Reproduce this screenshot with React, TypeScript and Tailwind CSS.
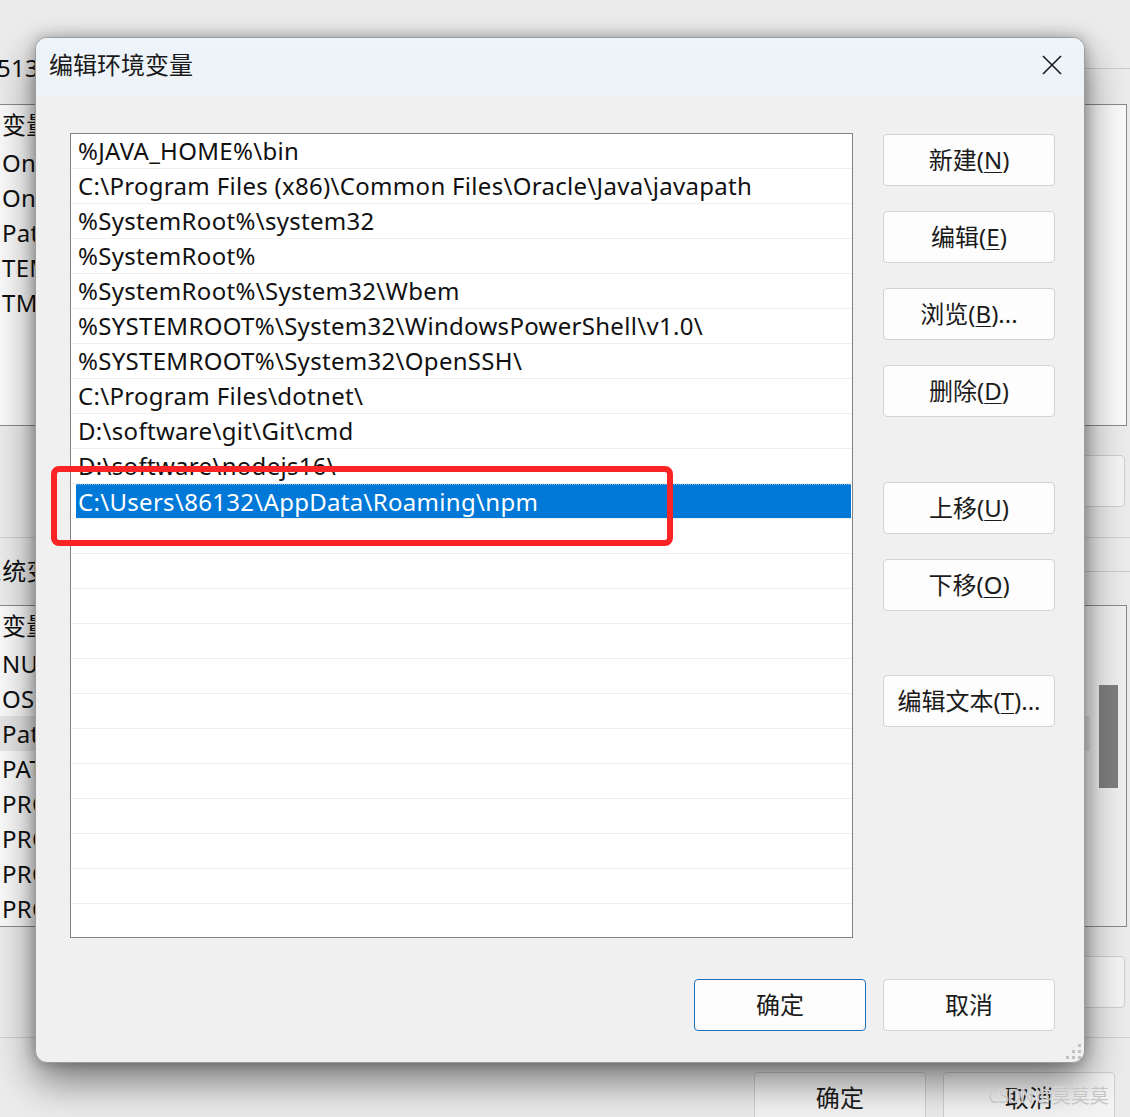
import React from "react";

const paths: string[] = [
  "%JAVA_HOME%\\bin",
  "C:\\Program Files (x86)\\Common Files\\Oracle\\Java\\javapath",
  "%SystemRoot%\\system32",
  "%SystemRoot%",
  "%SystemRoot%\\System32\\Wbem",
  "%SYSTEMROOT%\\System32\\WindowsPowerShell\\v1.0\\",
  "%SYSTEMROOT%\\System32\\OpenSSH\\",
  "C:\\Program Files\\dotnet\\",
  "D:\\software\\git\\Git\\cmd",
  "D:\\software\\nodejs16\\",
  "C:\\Users\\86132\\AppData\\Roaming\\npm",
];

const rows: string[] = [...paths, ...Array.from({ length: 12 }, () => "")];

function M({ children }: { children: React.ReactNode }) {
  return <span className="underline decoration-1 underline-offset-[3px]">{children}</span>;
}

function WinButton({
  children,
  primary,
  className,
}: {
  children?: React.ReactNode;
  primary?: boolean;
  className?: string;
}) {
  return (
    <div
      className={
        "flex h-[52px] w-[172px] shrink-0 items-center justify-center rounded-[4px] border bg-[#fdfdfd] text-[24px] text-[#1b1b1b] " +
        (primary ? "border-[#1f6fbf] " : "border-[#d2d2d2] ") +
        (className ?? "")
      }
    >
      {children}
    </div>
  );
}

function BgButton({ children }: { children?: React.ReactNode }) {
  return (
    <div className="flex h-[52px] w-[172px] shrink-0 items-center justify-center rounded-[4px] border border-[#cfcfcf] bg-[#f4f4f4] text-[24px] text-[#1b1b1b]">
      {children}
    </div>
  );
}

function Background() {
  const user = ["OneDrive", "OneDriveConsumer", "Path", "TEMP", "TMP"];
  const sys = ["NUMBER_OF_PROCESSORS", "OS", "Path", "PATHEXT", "PROCESSOR_ARCHITECTURE", "PROCESSOR_IDENTIFIER", "PROCESSOR_LEVEL", "PROCESSOR_REVISION"];
  return (
    <div className="flex w-[1130px] flex-col pt-[56px] text-[24px] tracking-[0.3px]">
      <div className="flex h-[24px] items-center -ml-[3px]">
        <span className="leading-none whitespace-nowrap">513 的用户变量(U)</span>
        <div className="ml-2 flex-1 border-t border-[#cbcbcb]" />
      </div>

      <div className="mt-[24px] -ml-[2px] h-[322px] w-[1129px] overflow-hidden border border-[#8a8a8a] bg-[#fafafa]">
        <div className="flex h-[40px] items-center pl-[3px] whitespace-nowrap">变量</div>
        {user.map((u, i) => (
          <div key={i} className="flex h-[35px] items-center pl-[3px] whitespace-nowrap">
            {u}
          </div>
        ))}
      </div>

      <div className="mt-[29px] flex justify-end gap-[17px] pr-[5px]">
        <BgButton>新建(N)...</BgButton>
        <BgButton>编辑(E)...</BgButton>
        <BgButton>删除(D)</BgButton>
      </div>

      <div className="mt-[30px] border-t border-[#d0d0d0]" />

      <div className="mt-[21px] flex h-[24px] items-center -ml-[22px]">
        <span className="leading-none whitespace-nowrap">系统变量(S)</span>
        <div className="ml-2 flex-1 border-t border-[#cbcbcb]" />
      </div>

      <div className="mt-[22px] -ml-[2px] flex h-[322px] w-[1129px] overflow-hidden border border-[#8a8a8a] bg-[#fafafa]">
        <div className="flex flex-1 flex-col">
          <div className="flex h-[40px] shrink-0 items-center pl-[3px] whitespace-nowrap">变量</div>
          {sys.map((u, i) => (
            <div
              key={i}
              className={
                "flex h-[35px] shrink-0 items-center pl-[3px] whitespace-nowrap " +
                (i === 2 ? "bg-[#e6e6e6]" : "")
              }
            >
              {u}
            </div>
          ))}
        </div>
        <div className="w-[36px] shrink-0 bg-[#f0f0f0]">
          <div className="ml-[9px] mt-[79px] h-[103px] w-[19px] bg-[#7f7f7f]" />
        </div>
      </div>

      <div className="mt-[29px] flex justify-end gap-[17px] pr-[5px]">
        <BgButton>新建(W)...</BgButton>
        <BgButton>编辑(I)...</BgButton>
        <BgButton>删除(L)</BgButton>
      </div>

      <div className="mt-[29px] border-t border-[#d0d0d0]" />

      <div className="mt-[34px] flex justify-end gap-[17px] pr-[15px]">
        <BgButton>确定</BgButton>
        <BgButton>取消</BgButton>
      </div>
    </div>
  );
}

function Dialog() {
  return (
    <div className="absolute left-[35px] top-[37px] flex h-[1026px] w-[1050px] flex-col overflow-hidden rounded-[12px] border border-[#9c9c9c] bg-[#f0f0f0] shadow-[0_18px_40px_rgba(0,0,0,0.5),0_0_14px_rgba(0,0,0,0.28)]">
      <div className="flex h-[57px] shrink-0 items-center justify-between bg-gradient-to-b from-[#edf4fa] to-[#eef3f7] pb-[4px] pl-[13px] pr-[22px]">
        <span className="text-[24px] leading-none text-[#1a1a1a]">编辑环境变量</span>
        <svg width="20" height="20" viewBox="0 0 20 20" className="shrink-0">
          <path d="M1 1 L19 19 M19 1 L1 19" stroke="#1a1a1a" strokeWidth="1.6" fill="none" />
        </svg>
      </div>

      <div className="flex gap-[30px] pl-[34px] pt-[38px]">
        <div className="h-[805px] w-[783px] shrink-0 overflow-hidden border border-[#828282] bg-white">
          {rows.map((r, i) => {
            const selected = i === 10;
            return (
              <div key={i} className="h-[35px] border-b border-[#efefef] pl-[5px] pr-[1px]">
                <div
                  className={
                    "flex h-[34px] items-center pl-[2px] text-[24px] tracking-[0.3px] whitespace-nowrap " +
                    (selected ? "border-t border-dotted border-[#7fb6e8] bg-[#0078d7] text-white" : "text-[#111111]")
                  }
                >
                  {r}
                </div>
              </div>
            );
          })}
        </div>

        <div className="flex w-[172px] shrink-0 flex-col gap-[25px] pt-[1px]">
          <WinButton>
            新建(<M>N</M>)
          </WinButton>
          <WinButton>
            编辑(<M>E</M>)
          </WinButton>
          <WinButton>
            浏览(<M>B</M>)...
          </WinButton>
          <WinButton>
            删除(<M>D</M>)
          </WinButton>
          <WinButton className="mt-[40px]">
            上移(<M>U</M>)
          </WinButton>
          <WinButton>
            下移(<M>O</M>)
          </WinButton>
          <WinButton className="mt-[39px]">
            编辑文本(<M>T</M>)...
          </WinButton>
        </div>
      </div>

      <div className="mt-[41px] flex justify-end gap-[17px] pr-[29px]">
        <WinButton primary>确定</WinButton>
        <WinButton>取消</WinButton>
      </div>

      <svg width="16" height="16" viewBox="0 0 16 16" className="absolute bottom-[3px] right-[3px]">
        <g fill="#c2c2c2">
          <rect x="13" y="1" width="3" height="3" />
          <rect x="7" y="7" width="3" height="3" />
          <rect x="13" y="7" width="3" height="3" />
          <rect x="1" y="13" width="3" height="3" />
          <rect x="7" y="13" width="3" height="3" />
          <rect x="13" y="13" width="3" height="3" />
        </g>
      </svg>
    </div>
  );
}

export default function App() {
  return (
    <div className="relative h-[1117px] w-[1130px] overflow-hidden bg-[#ececec] font-['Noto_Sans','Noto_Sans_CJK_SC',sans-serif] text-[#111111]">
      <Background />
      <Dialog />
      <div className="absolute left-[51px] top-[466px] h-[80px] w-[622px] rounded-[8px] border-[6px] border-[#fb2424]" />
      <div className="absolute left-[988px] top-[1087px] text-[19px] leading-none whitespace-nowrap text-[#c4c4c4] [text-shadow:0_0_1px_#ffffff]">
        <span className="tracking-[-1.5px]">CSDN @</span>莫莫莫
      </div>
    </div>
  );
}
